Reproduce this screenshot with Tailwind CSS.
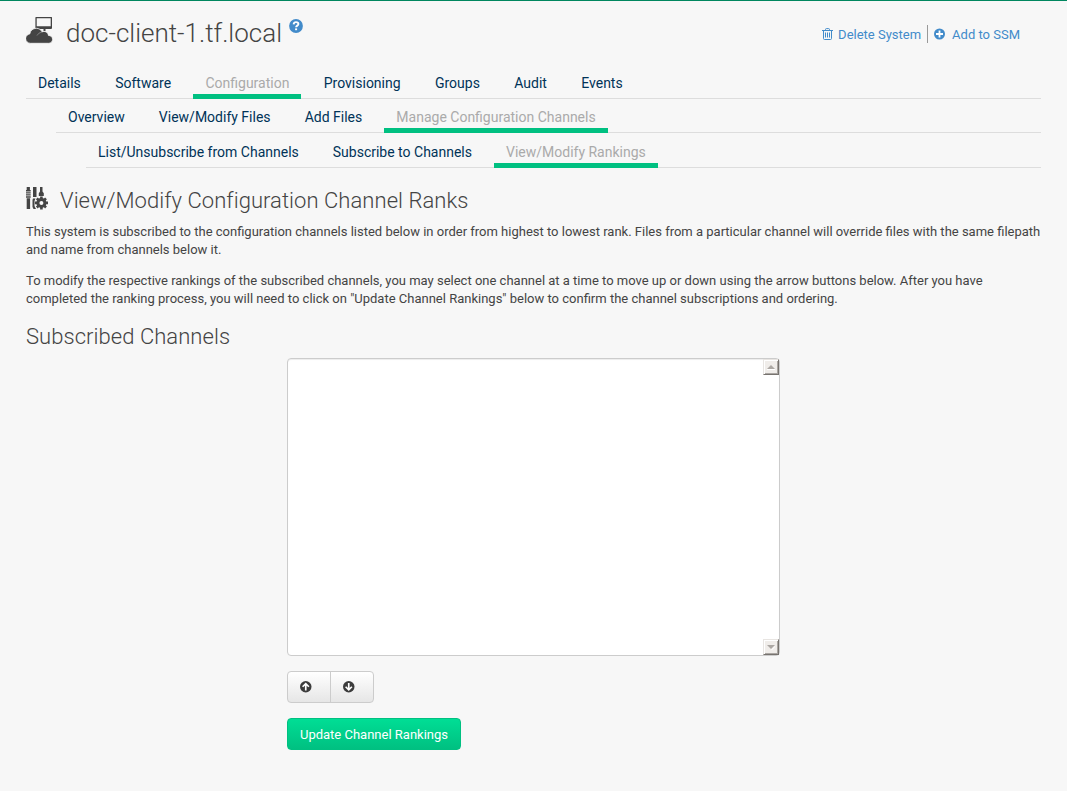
<!DOCTYPE html>
<html lang="en">
<head>
<meta charset="utf-8">
<title>View/Modify Configuration Channel Ranks</title>
<script src="https://cdn.jsdelivr.net/npm/@tailwindcss/browser@4"></script>
</head>
<body class="h-[791px] overflow-hidden border-t border-[#00875f] bg-[#f7f7f7] pr-[26px] pl-[26px] font-[Roboto,sans-serif] text-[13px] leading-[18px] text-[#444]">
<header class="flex h-[67px] items-start">
  <svg class="mt-4 h-[27px] w-[27px] shrink-0" viewBox="0 0 27 27" fill="#444">
    <path fill-rule="evenodd" d="M10 0h15.500q.5 0 .5.500V11q0 1-1 1h-5.500v2h-2v-2H10q-.6 0-.6-.6V.6q0-.6.6-.6zm.700 1.300v8h14v-8z"/>
    <path stroke="#f7f7f7" stroke-width=".8" d="M4.500 26.300C1.800 26.300-.4 24.200-.4 21.500c0-2.500 1.900-4.200 4.200-4.600C4.300 13.500 7 11.300 10.300 11.300c2.500 0 4.700 1.300 5.800 3.600 2.700-1.300 6 .3 6.300 3.500 2.300 0 4.200 1.600 4.200 4 0 2.200-1.700 3.900-4 3.900z"/>
    <path d="M11 18.500q1.500-3 5-3.500" fill="none" stroke="#999" stroke-width=".7"/>
  </svg>
  <h1 class="mt-[14px] ml-[13px] text-[26px] leading-9 font-light whitespace-nowrap">doc-client-1.tf.local</h1>
  <svg class="mt-[18px] ml-[7px] h-[14px] w-[14px] shrink-0" viewBox="0 0 14 14"><circle cx="7" cy="7" r="6.900" fill="#428bca"/><path d="M4.600 5.300C4.800 3.700 5.700 3.100 7 3.100c1.400 0 2.400.7 2.400 1.900C9.400 6.700 7.100 6.600 7.100 8.300" fill="none" stroke="#fff" stroke-width="1.900"/><path d="M6.100 9.400h2v1.800h-2z" fill="#fff"/></svg>
  <div class="mt-[24px] mr-[21px] ml-auto flex h-[18px] items-center whitespace-nowrap text-[#428bca]">
    <svg class="mr-[5px] h-[12px] w-[11px]" viewBox="0 0 11 12" fill="none" stroke="#428bca"><path d="M0 2.500h11M3.500 2.500v-1q0-.9.900-.9h2.200q.9 0 .9.900v1M1.500 2.500v8q0 1 1 1h6q1 0 1-1v-8M3.500 4.500v5M5.500 4.500v5M7.500 4.500v5"/></svg>
    <a class="pt-[2px]">Delete System</a>
    <span class="ml-[6px] h-[18px] w-px bg-[#999]"></span>
    <svg class="mr-[7px] ml-[6px] h-[12px] w-[11px]" viewBox="0 0 11 11"><circle cx="5.500" cy="5.500" r="5.500" fill="#428bca"/><path d="M5.500 2v7M2 5.500h7" stroke="#fff" stroke-width="1.800"/></svg>
    <a class="pt-[2px]">Add to SSM</a>
  </div>
</header>
<nav class="flex h-[31px] gap-[10.35px] border-b border-[#ddd] text-sm leading-[30px] whitespace-nowrap text-[#003358]">
  <a class="px-3">Details</a><a class="px-3">Software</a><a class="h-[31px] border-b-5 border-[#00c081] px-3 text-[#aaa]">Configuration</a><a class="px-3">Provisioning</a><a class="px-3">Groups</a><a class="px-3">Audit</a><a class="px-3">Events</a>
</nav>
<nav class="ml-[30px] flex h-[34px] gap-[10.1px] border-b border-[#ddd] text-sm leading-[36px] whitespace-nowrap text-[#003358]">
  <a class="px-3">Overview</a><a class="px-3">View/Modify Files</a><a class="px-3">Add Files</a><a class="h-[34px] border-b-5 border-[#00c081] px-3 text-[#aaa]">Manage Configuration Channels</a>
</nav>
<nav class="ml-[60px] flex h-[35px] gap-[10px] border-b border-[#ddd] text-sm leading-[38px] whitespace-nowrap text-[#003358]">
  <a class="px-3">List/Unsubscribe from Channels</a><a class="px-3">Subscribe to Channels</a><a class="h-[35px] border-b-5 border-[#00c081] px-3 text-[#aaa]">View/Modify Rankings</a>
</nav>
<main>
  <div class="flex h-[55px] items-start">
    <svg class="mt-[19px] h-[23px] w-[22px] shrink-0" viewBox="0 0 22 23" fill="#444">
      <path d="M.7 0h3.200v3H4.700v1.500H0V3h.7zM0 5.200h4.700v1.300H0zM0 7.200h4.700v1.300H0zM0 9.200h4.700v1.500H0zM.7 11.300h3.400V22H.7zM7 0h3.500v10H7zM14 0h2.500v4.500l1.300 1.700V9h-5V6.200L14 4.500zM7 11.500h2.500L8.500 14v5l1.500 3H7.500L6.500 20v-7z"/>
      <circle cx="15.400" cy="15.900" r="3.500" fill="none" stroke="#444" stroke-width="3"/>
      <path d="M15.400 9.400v2.500M15.400 19.900v2.500M8.900 15.900h2.500M19.400 15.900H22M10.800 11.300l1.800 1.800M18.200 18.700l1.800 1.800M10.800 20.500l1.800-1.800M18.200 13.100l1.800-1.800" stroke="#444" stroke-width="2.600"/>
    </svg>
    <h2 class="mt-[17px] ml-3 text-[22px] leading-8 font-light tracking-[0.05px] whitespace-nowrap">View/Modify Configuration Channel Ranks</h2>
  </div>
  <p class="whitespace-nowrap">This system is subscribed to the configuration channels listed below in order from highest to lowest rank. Files from a particular channel will override files with the same filepath<br>and name from channels below it.</p>
  <p class="mt-[13px] whitespace-nowrap">To modify the respective rankings of the subscribed channels, you may select one channel at a time to move up or down using the arrow buttons below. After you have<br>completed the ranking process, you will need to click on "Update Channel Rankings" below to confirm the channel subscriptions and ordering.</p>
  <h2 class="mt-[13px] text-[22px] leading-8 font-light tracking-[0.05px]">Subscribed Channels</h2>
  <div class="mt-[5px] ml-[261px]">
    <div class="flex h-[298px] w-[493px] flex-col items-end justify-between rounded-[4px] border border-[#ccc] bg-white shadow-[inset_0_1px_1px_rgba(0,0,0,0.075)]">
      <div class="flex h-4 w-4 items-center justify-center border border-t-[#e8e5e2] border-r-[#77736f] border-b-[#77736f] border-l-[#e8e5e2] bg-[#f0edea] shadow-[inset_1px_1px_0_#fff,inset_-1px_-1px_0_#aaa6a2]"><svg class="h-[5px] w-[8px]" viewBox="0 0 8 5"><path d="M0 4h8v1H0z" fill="#fff"/><path d="M0 4L4 0l4 4z" fill="#aca8a4"/></svg></div>
      <div class="flex h-4 w-4 items-center justify-center border border-t-[#e8e5e2] border-r-[#77736f] border-b-[#77736f] border-l-[#e8e5e2] bg-[#f0edea] shadow-[inset_1px_1px_0_#fff,inset_-1px_-1px_0_#aaa6a2]"><svg class="h-[5px] w-[8px]" viewBox="0 0 8 5"><path d="M4 5l4-4v1L5 5z" fill="#fff"/><path d="M0 0h8L4 4z" fill="#aca8a4"/></svg></div>
    </div>
    <div class="mt-[15px] flex h-8 w-[87px] rounded-[4px] border border-[#ccc] bg-linear-to-b from-white to-[#e6e6e6]">
      <button class="flex h-[30px] w-[43px] items-center border-r border-[#ccc] pl-3"><svg class="h-[11.500px] w-[11.500px]" viewBox="0 0 11 11"><circle cx="5.500" cy="5.500" r="5.500" fill="#3c3c3c"/><path d="M5.500 9V3M2.500 5.500l3-3 3 3" fill="none" stroke="#fff" stroke-width="1.600"/></svg></button>
      <button class="flex h-[30px] w-[42px] items-center pl-3"><svg class="h-[11.500px] w-[11.500px]" viewBox="0 0 11 11"><circle cx="5.500" cy="5.500" r="5.500" fill="#3c3c3c"/><path d="M5.500 2v6M2.500 5.500l3 3 3-3" fill="none" stroke="#fff" stroke-width="1.600"/></svg></button>
    </div>
    <button class="mt-[15px] block h-8 w-[174px] rounded-[4px] border border-[#00c081] bg-linear-to-b from-[#00de95] to-[#00c081] pt-[2px] text-center whitespace-nowrap text-white">Update Channel Rankings</button>
  </div>
</main>
</body>
</html>
